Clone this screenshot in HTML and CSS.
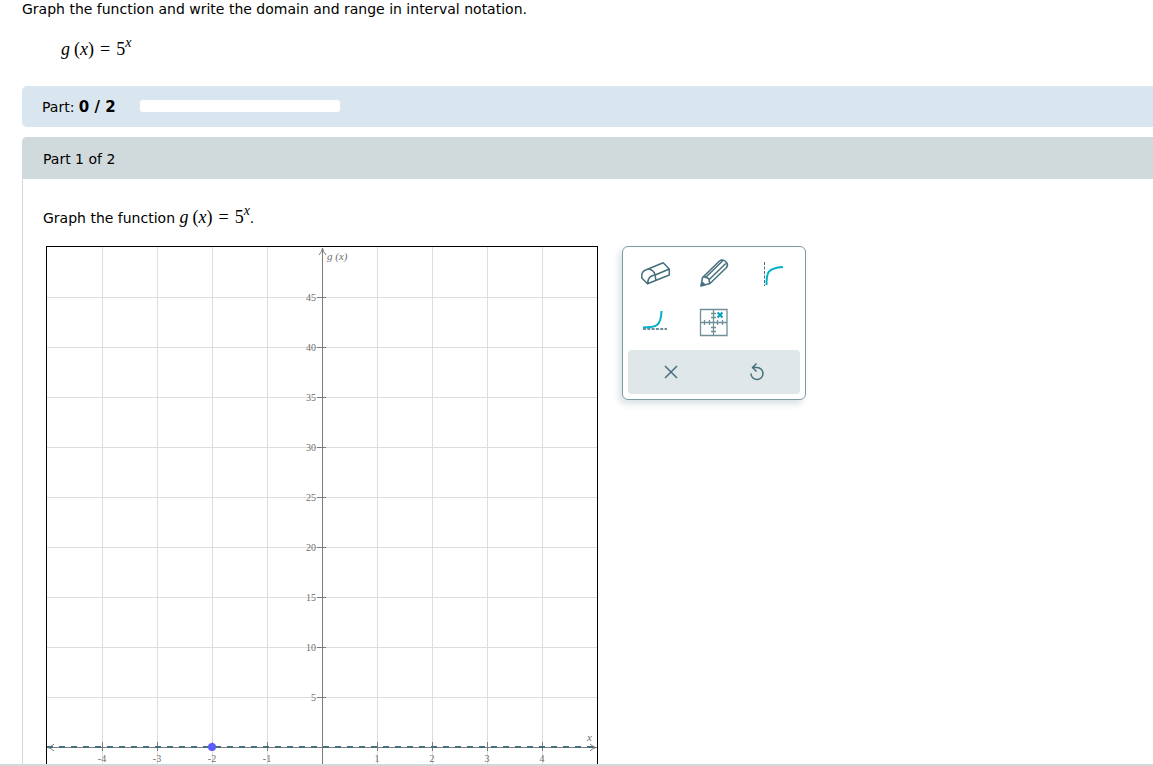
FILE: index.html
```
<!DOCTYPE html>
<html lang="en">

<head>
  <meta charset="UTF-8">
  <meta name="viewport" content="width=device-width, initial-scale=1.0">
  <title>Graphing an exponential function</title>
  <link rel="stylesheet" href="styles.css">
</head>

<body>
  <main class="question">
    <p class="prompt">Graph the function and write the domain and range in interval notation.</p>
    <p class="formula"><span class="math"><i>g</i><span class="arg">(<i>x</i>)</span><span class="eq">=</span>5<sup>x</sup></span></p>

    <div class="progress-bar">
      <label for="progress">Part: <b>0 / 2</b></label>
      <progress id="progress" value="0" max="2"></progress>
    </div>

    <section class="part">
      <h2 class="part-title">Part 1 of 2</h2>
      <div class="part-body">
        <p class="instruction">Graph the function <span class="math"><i>g</i><span class="arg">(<i>x</i>)</span><span class="eq">=</span>5<sup>x</sup></span>.</p>

        <div class="workspace">
          <svg class="graph" viewBox="0 0 550 550" role="img" aria-label="Coordinate grid">
            <!-- grid -->
            <path class="grid" d="M55.5 0V550M110.5 0V550M165.5 0V550M220.5 0V550M330.5 0V550M385.5 0V550M440.5 0V550M495.5 0V550
              M0 50.5H550M0 100.5H550M0 150.5H550M0 200.5H550M0 250.5H550M0 300.5H550M0 350.5H550M0 400.5H550M0 450.5H550" />
            <!-- axes and ticks -->
            <path class="axis" d="M275.5 1V550M0 500.5H550
              M270 50.5H279M270 100.5H279M270 150.5H279M270 200.5H279M270 250.5H279M270 300.5H279M270 350.5H279M270 400.5H279M270 450.5H279
              M55.5 495V504M110.5 495V504M165.5 495V504M220.5 495V504M330.5 495V504M385.5 495V504M440.5 495V504M495.5 495V504" />
            <path class="axis-arrow" d="M272 8Q275 5 275.5 1Q276 5 279 8M7 497Q4 500 1 500.5Q4 501 7 504M543 497Q546 500 549 500.5Q546 501 543 504" />
            <g class="labels labels-y">
              <text x="269" y="54">45</text>
              <text x="269" y="104">40</text>
              <text x="269" y="154">35</text>
              <text x="269" y="204">30</text>
              <text x="269" y="254">25</text>
              <text x="269" y="304">20</text>
              <text x="269" y="354">15</text>
              <text x="269" y="404">10</text>
              <text x="269" y="454">5</text>
            </g>
            <g class="labels labels-x">
              <text x="55" y="515">-4</text>
              <text x="110" y="515">-3</text>
              <text x="165" y="515">-2</text>
              <text x="220" y="515">-1</text>
              <text x="330" y="515">1</text>
              <text x="385" y="515">2</text>
              <text x="440" y="515">3</text>
              <text x="495" y="515">4</text>
            </g>
            <text class="axis-name" x="280" y="13">g (x)</text>
            <text class="axis-name" x="540" y="494">x</text>
            <!-- asymptote and plotted point -->
            <path class="asymptote" d="M0 500H550" />
            <circle class="point" cx="165" cy="500" r="4" />
          </svg>

          <div class="tools">
            <div class="tool-grid">
              <button type="button" aria-label="Eraser">
                <svg width="32" height="32" viewBox="0 0 32 32">
                  <path class="line" d="M4.5 13.5L23.2 5.8L29.3 12V18L7.5 26.7L1.8 21V17.5Q2 15 4.5 13.5ZM8.5 12Q14 13 15.2 18L15.8 23.5M15.2 18L29.3 12M15.2 18Q8 18.5 7.5 26.7" />
                </svg>
              </button>
              <button type="button" aria-label="Pencil">
                <svg width="32" height="32" viewBox="0 0 32 32">
                  <path class="line" d="M4.5 20.5L21.5 4Q24 2 27 4L28.5 5.5Q30.5 8 28.5 10.5L12 26.5L3 29ZM4.5 20.5Q6.5 19 7.5 20.5Q11.5 20.5 11.2 24.5L12 26.5M7.5 20.5L24.5 4M11.2 22.5L27.8 6.5" />
                  <path class="fill" d="M3.5 25Q7 25 7 28L2.5 29.3Z" />
                </svg>
              </button>
              <button type="button" aria-label="Vertical asymptote">
                <svg width="32" height="32" viewBox="0 0 32 32">
                  <path class="dash-v" d="M8.5 5V29" />
                  <path class="curve" d="M10.5 28C10.5 16 11 11 27 10" />
                </svg>
              </button>
              <button type="button" aria-label="Horizontal asymptote">
                <svg width="32" height="32" viewBox="0 0 32 32">
                  <path class="dash-h" d="M3 24H27" />
                  <path class="curve" d="M3 22.5C16 22.5 21 21.5 21.5 6" />
                </svg>
              </button>
              <button type="button" aria-label="Plot a point">
                <svg width="32" height="32" viewBox="0 0 32 32">
                  <path class="plane" d="M2.5 4.5H29V30.5H2.5ZM15.5 4.5V30.5M2.5 17.5H29M6.5 15V20M11.5 15V20M19.5 15V20M24.5 15V20M13 8.5H18M13 12.5H18M13 22.5H18M13 26.5H18" />
                  <path class="cross" d="M19.5 7.5L24.5 12.5M24.5 7.5L19.5 12.5" />
                </svg>
              </button>
            </div>
            <div class="tool-actions">
              <button type="button" aria-label="Clear">
                <svg width="20" height="20" viewBox="0 0 20 20">
                  <path class="line" d="M4 4L16 16M16 4L4 16" />
                </svg>
              </button>
              <button type="button" aria-label="Undo">
                <svg width="20" height="20" viewBox="0 0 20 20">
                  <path class="line" d="M9.5 1.5L5.5 5.5L9.5 9.5M5.5 5.5H10A6 6 0 1 1 4 11.5" />
                </svg>
              </button>
            </div>
          </div>
        </div>
      </div>
    </section>
  </main>
</body>

</html>
```
FILE: styles.css
```
* {
  padding: 0;
  margin: 0;
  box-sizing: border-box;
}

body {
  height: 100vh;
  overflow: hidden;
  border-bottom: 2px solid #d0dada;
  background-color: #ffffff;
  color: #000000;
  font-family: Verdana, "DejaVu Sans", sans-serif;
  font-size: 14px;
  line-height: 18px;
}

.question {
  height: 100%;
  overflow: hidden;
  padding-left: 22px;
}

.formula {
  padding: 22px 0 0 39px;
  height: 68px;
}

.math {
  font-family: "Liberation Serif", serif;
  font-size: 18px;
}

.math .arg {
  margin-left: 4px;
}

.math .eq {
  margin: 0 6px;
}

.math sup {
  font-size: 14px;
  font-style: italic;
  line-height: 0;
  vertical-align: 8px;
}

.progress-bar {
  display: flex;
  align-items: center;
  gap: 20px;
  height: 41px;
  padding-left: 20px;
  border-radius: 5px 0 0 5px;
  background-color: #dae6ef;
}

.progress-bar label {
  min-width: 78px;
}

.progress-bar b {
  font-size: 15px;
}

.progress-bar progress {
  appearance: none;
  width: 200px;
  height: 12px;
  margin-bottom: 2px;
  border: none;
  border-radius: 3px;
  background-color: #ffffff;
  overflow: hidden;
}

.progress-bar progress::-webkit-progress-bar {
  background-color: #ffffff;
}

.part {
  margin-top: 10px;
  border-left: 1px solid #d0dada;
  border-radius: 5px 0 0 0;
}

.part-title {
  height: 42px;
  padding: 13px 21px;
  margin-left: -1px;
  border-radius: 5px 0 0 0;
  background-color: #d0d9dc;
  font-size: 14px;
  font-weight: normal;
}

.part-body {
  padding: 29px 20px 20px;
}

.workspace {
  display: flex;
  align-items: flex-start;
  gap: 24px;
  margin: 19px 0 0 3px;
}

.graph {
  flex: none;
  box-sizing: content-box;
  width: 550px;
  height: 550px;
  border: 1px solid #000000;
}

.graph path {
  fill: none;
}

.grid {
  stroke: #dddddd;
}

.axis,
.axis-arrow {
  stroke: #7b7b7b;
}

.graph text {
  fill: #6e6e6e;
  font-family: "Liberation Serif", serif;
  font-size: 10px;
}

.labels-y {
  text-anchor: end;
}

.labels-x {
  text-anchor: middle;
}

.graph .axis-name {
  font-size: 11px;
  font-style: italic;
}

.asymptote {
  stroke: #456f7c;
  stroke-width: 2;
  stroke-dasharray: 6 6;
}

.point {
  fill: #5c5cff;
}

.tools {
  flex: none;
  width: 184px;
  padding: 10px 5px 5px;
  border: 1px solid #7d9ba5;
  border-radius: 6px;
  box-shadow: -3px 4px 6px rgba(69, 111, 124, 0.2);
}

.tool-grid {
  display: grid;
  grid-template-columns: repeat(3, 58px);
  grid-auto-rows: 32px;
  row-gap: 16px;
  margin-bottom: 13px;
  justify-content: center;
}

.tools button {
  display: flex;
  align-items: center;
  justify-content: center;
  border: none;
  background: none;
  cursor: pointer;
}

.tool-actions {
  display: grid;
  grid-template-columns: 1fr 1fr;
  height: 44px;
  border-radius: 4px;
  background-color: #dfe7e9;
}

.tools path {
  fill: none;
}

.line {
  stroke: #456f7c;
  stroke-width: 1.5;
  stroke-linejoin: round;
}

.tools .fill {
  fill: #456f7c;
}

.curve {
  stroke: #00b0ca;
  stroke-width: 2;
}

.dash-v {
  stroke: #456f7c;
  stroke-dasharray: 3 1.5;
}

.dash-h {
  stroke: #6f8f99;
  stroke-width: 2;
  stroke-dasharray: 3 1.3;
}

.plane {
  stroke: #6f8f99;
  stroke-width: 1.3;
}

.cross {
  stroke: #00a3bd;
  stroke-width: 2;
}
```
